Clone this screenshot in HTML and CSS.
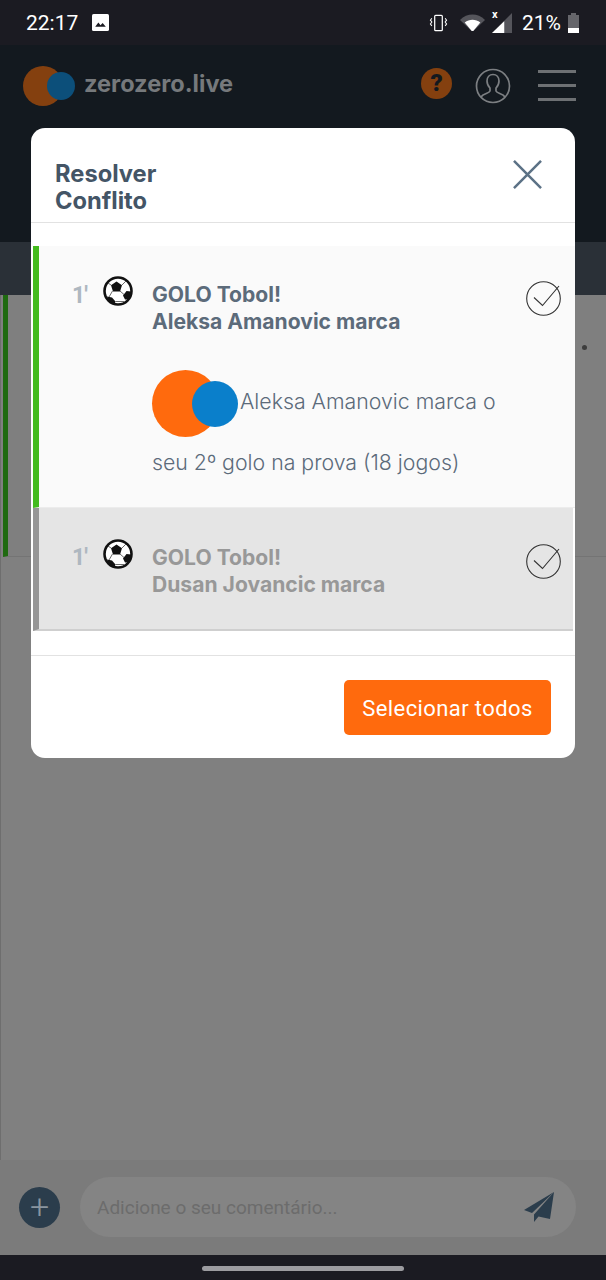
FILE: index.html
```html
<!DOCTYPE html>
<html lang="pt">
<head>
    <meta charset="UTF-8">
    <meta name="viewport" content="width=device-width, initial-scale=1.0">
    <title>Resolver Conflito</title>
    <link rel="stylesheet" href="styles.css">
</head>
<body>
    <svg class="defs" width="0" height="0">
        <symbol id="ball" viewBox="0 0 30 30">
            <circle cx="15" cy="15" r="13.500" fill="#fff" stroke="#111" stroke-width="2.600"/>
            <path d="M13.500 5.500l5.500 3.800-2 6.200H10L8 9.300z" fill="#111"/>
            <path d="M4 20.500l5 1 3.500 4-1 3c-3.500-1-6.500-4-7.500-8z" fill="#111"/>
            <path d="M28 15.500l-4.500-.5-3.500 4.500 2 4 3.500 0c1.500-2 2.500-5 2.500-8z" fill="#111"/>
            <path d="M17 15l4 3.500M9.500 15l-3.500 6M19 9l4-4M8 9L5 7M12.500 25.500H21" fill="none" stroke="#444" stroke-width=".8"/>
        </symbol>
        <symbol id="check" viewBox="0 0 36 36">
            <circle cx="17.500" cy="18.500" r="16.800" fill="none" stroke="#333" stroke-width="1.100"/>
            <path d="M8 17.500l8.500 8L33 6" fill="none" stroke="#333" stroke-width="1.100"/>
        </symbol>
    </svg>

    <div class="page">
        <div class="status-bar">
            <div class="status-left">
                <span>22:17</span>
                <svg class="status-pic" viewBox="0 0 16 16"><rect width="16" height="16" rx="1.500" fill="#fff"/><path d="M3 12l3-4 2 2.500 2-2 3 3.500z" fill="#1b1b22"/></svg>
            </div>
            <div class="status-right">
                <svg class="status-vib" viewBox="0 0 20 18"><rect x="6" y="1" width="8" height="16" rx="1" fill="none" stroke="#fff" stroke-width="1.300"/><path d="M3 4L1.500 6 3 8 1.500 10 3 12M17 4l1.500 2L17 8l1.500 2L17 12" fill="none" stroke="#fff" stroke-width="1.100"/></svg>
                <svg class="status-wifi" viewBox="0 0 24 16"><path d="M0 5.500C7-1.500 17-1.500 24 5.500L12 17z" fill="#55555b"/><path d="M4.500 8c4.500-3.500 10.500-3.500 15 0L12 17z" fill="#fff"/></svg>
                <div class="status-signal">
                    <svg viewBox="0 0 18 18"><path d="M18 0v18H0z" fill="#55555b"/><path d="M11 7.500V18H0z" fill="#fff"/></svg>
                    <span class="status-x">x</span>
                </div>
                <span class="status-pct">21%</span>
                <div class="battery"><div class="battery-cap"></div><div class="battery-body"><div class="battery-level"></div></div></div>
            </div>
        </div>

        <header class="top-bar">
            <div class="brand">
                <div class="logo logo-dim"><span class="logo-o"></span><span class="logo-b"></span></div>
                <span class="brand-name">zerozero.live</span>
            </div>
            <div class="top-icons">
                <div class="help">?</div>
                <svg class="user-icon" viewBox="0 0 36 36"><circle cx="18" cy="18" r="16.500" fill="none" stroke="#7c7f82" stroke-width="1.700"/><path d="M6 29c2-3.500 8-3.500 9-6v-3c-2-2-3-4-3-7 0-4 2.500-6.500 6-6.500s6 2.500 6 6.500c0 3-1 5-3 7v3c1 2.500 7 2.500 9 6" fill="none" stroke="#7c7f82" stroke-width="1.700"/></svg>
                <div class="menu-icon"><span></span><span></span><span></span></div>
            </div>
        </header>

        <div class="tab-band"></div>

        <main class="feed">
            <div class="feed-card"><span class="feed-dots"></span></div>
        </main>

        <div class="comment-bar">
            <div class="add-btn">+</div>
            <div class="comment-input">
                <span>Adicione o seu comentário...</span>
                <svg class="send-icon" viewBox="0 0 32 32"><path d="M31 1L1 19l8 3zM31 1L11 23.500V31l4.500-5.500L27 28z" fill="#2b3d4c"/></svg>
            </div>
        </div>

        <div class="nav-bar"><span class="nav-pill"></span></div>
    </div>

    <section class="modal">
        <div class="modal-head">
            <h2>Resolver<br>Conflito</h2>
            <svg class="close-icon" viewBox="0 0 30 30"><path d="M1 1l28 28M29 1L1 29" stroke="#5c7286" stroke-width="2.600" fill="none"/></svg>
        </div>

        <div class="modal-body">
            <div class="event event-on">
                <span class="minute">1'</span>
                <svg class="ball"><use href="#ball"/></svg>
                <div class="event-text">
                    <h3>GOLO Tobol!<br>Aleksa Amanovic marca</h3>
                    <p class="event-desc"><span class="logo logo-big"><span class="logo-o"></span><span class="logo-b"></span></span>Aleksa Amanovic marca o seu 2º golo na prova (18 jogos)</p>
                </div>
                <svg class="check"><use href="#check"/></svg>
            </div>
            <div class="event event-off">
                <span class="minute">1'</span>
                <svg class="ball"><use href="#ball"/></svg>
                <div class="event-text">
                    <h3>GOLO Tobol!<br>Dusan Jovancic marca</h3>
                </div>
                <svg class="check"><use href="#check"/></svg>
            </div>
        </div>

        <div class="modal-foot">
            <button class="select-all">Selecionar todos</button>
        </div>
    </section>
</body>
</html>
```

FILE: styles.css
```css
* {
    box-sizing: border-box;
}

body {
    margin: 0;
    font-family: Roboto, "Liberation Sans", sans-serif;
    background-color: #808080;
    color: #fff;
}

h2, h3, p {
    margin: 0;
}

.defs {
    position: absolute;
}

.page {
    width: 606px;
    height: 1280px;
    display: flex;
    flex-direction: column;
}

/* status bar */
.status-bar {
    height: 45px;
    padding: 0 27px 0 26px;
    display: flex;
    justify-content: space-between;
    align-items: center;
    background-color: #1b1b22;
    font-size: 21px;
}

.status-left, .status-right {
    display: flex;
    align-items: center;
}

.status-left {
    gap: 14px;
}

.status-pic {
    width: 17px;
    height: 17px;
}

.status-vib {
    width: 19px;
    height: 18px;
}

.status-wifi {
    width: 25px;
    height: 17px;
    margin-left: 12px;
}

.status-signal {
    position: relative;
    width: 20px;
    height: 19px;
    margin-left: 7px;
}

.status-signal svg {
    display: block;
}

.status-x {
    position: absolute;
    left: 0;
    top: -5px;
    font-size: 11px;
    font-weight: 700;
}

.status-pct {
    margin-left: 10px;
}

.battery {
    margin-left: 7px;
    width: 11px;
}

.battery-cap {
    width: 5px;
    height: 2px;
    margin: 0 auto;
    background-color: #66666b;
}

.battery-body {
    height: 18px;
    display: flex;
    align-items: flex-end;
    background-color: #66666b;
}

.battery-level {
    width: 100%;
    height: 5px;
    background-color: #fff;
}

/* dimmed header */
.top-bar {
    height: 197px;
    padding: 21px 30px 0 23px;
    display: flex;
    justify-content: space-between;
    align-items: flex-start;
    background-color: #13191f;
}

.brand {
    display: flex;
    align-items: center;
    gap: 9px;
}

.brand-name {
    margin-top: -5px;
    font-family: Inter, sans-serif;
    font-size: 23.600px;
    font-weight: 700;
    color: #76797c;
}

.logo {
    position: relative;
    display: inline-block;
}

.logo-dim {
    width: 52px;
    height: 40px;
}

.logo-o, .logo-b {
    position: absolute;
    border-radius: 50%;
}

.logo-dim .logo-o {
    left: 0;
    top: 0;
    width: 40px;
    height: 40px;
    background-color: #84400f;
}

.logo-dim .logo-b {
    left: 24px;
    top: 6px;
    width: 28px;
    height: 28px;
    background-color: #0c4f7a;
}

.top-icons {
    display: flex;
    align-items: flex-start;
    padding-top: 2px;
}

.help {
    width: 31px;
    height: 31px;
    margin: 0 0 0 -2px;
    border-radius: 50%;
    background-color: #84400f;
    color: #13191f;
    font-size: 24px;
    font-weight: 900;
    line-height: 31px;
    text-align: center;
}

.user-icon {
    width: 36px;
    height: 36px;
    margin-left: 23px;
}

.menu-icon {
    width: 38px;
    height: 31px;
    margin: 2px 0 0 27px;
    display: flex;
    flex-direction: column;
    justify-content: space-between;
}

.menu-icon span {
    height: 3px;
    background-color: #6d7073;
}

.tab-band {
    height: 53px;
    background-color: #2a3037;
}

/* page behind the dialog */
.feed {
    flex: 1;
    background-color: #808080;
    border-left: 1px solid #6e6e6e;
}

.feed-card {
    position: relative;
    height: 262px;
    margin-left: 2px;
    border-left: 5px solid #1f6a10;
    border-bottom: 1px solid #747474;
    background-color: #7f7f7f;
}

.feed-dots {
    position: absolute;
    right: 19px;
    top: 50px;
    width: 5px;
    height: 5px;
    border-radius: 50%;
    background-color: #3d3d3d;
}

.comment-bar {
    height: 95px;
    padding: 17px 30px 0 19px;
    display: flex;
    gap: 20px;
    background-color: #7b7b7b;
}

.add-btn {
    width: 41px;
    height: 41px;
    margin-top: 10px;
    border-radius: 50%;
    background-color: #2b3d4c;
    color: #8a959f;
    font-size: 34px;
    font-weight: 300;
    line-height: 39px;
    text-align: center;
}

.comment-input {
    flex: 1;
    height: 60px;
    padding: 0 21px 0 17px;
    display: flex;
    justify-content: space-between;
    align-items: center;
    border-radius: 30px;
    background-color: #848484;
    color: #6c6c6c;
    font-size: 19px;
}

.send-icon {
    width: 32px;
    height: 32px;
}

.nav-bar {
    height: 25px;
    padding-top: 11px;
    display: flex;
    justify-content: center;
    background-color: #1b1b22;
}

.nav-pill {
    width: 202px;
    height: 5px;
    border-radius: 3px;
    background-color: #9c9ca0;
}

/* dialog */
.modal {
    position: absolute;
    left: 31px;
    top: 128px;
    width: 544px;
    height: 630px;
    display: flex;
    flex-direction: column;
    border-radius: 14px;
    background-color: #fff;
    color: #4a5c6d;
    overflow: hidden;
}

.modal-head {
    height: 95px;
    padding: 32px 33px 0 24px;
    display: flex;
    justify-content: space-between;
    align-items: flex-start;
    border-bottom: 1px solid #e2e2e2;
}

.modal-head h2 {
    font-family: Inter, sans-serif;
    font-size: 23.700px;
    font-weight: 700;
    line-height: 27px;
    color: #445566;
}

.close-icon {
    width: 29px;
    height: 29px;
}

.modal-body {
    height: 433px;
    padding: 23px 2px 0;
    border-bottom: 1px solid #e2e2e2;
}

.event {
    display: flex;
    border-left: 6px solid;
}

.event-on {
    height: 262px;
    padding: 35px 0 0 33px;
    margin-right: -2px;
    border-left-color: #43bb1e;
    border-bottom: 1px solid #ececec;
    background-color: #fafafa;
}

.event-off {
    height: 123px;
    padding: 35px 0 0 33px;
    border-left-color: #969696;
    border-bottom: 2px solid #cfcfcf;
    background-color: #e5e5e5;
}

.minute {
    width: 31px;
    margin-top: 2px;
    font-size: 23px;
    font-weight: 700;
    line-height: 26px;
    letter-spacing: -1px;
    color: #aeb7c0;
}

.ball {
    width: 30px;
    height: 30px;
    margin-top: -5px;
    flex: none;
}

.event-off .ball {
    margin-top: -4px;
}

.event-text {
    width: 375px;
    margin-left: 19px;
}

.event-off .event-text {
    margin-top: 1px;
}

.event-text h3 {
    font-family: Inter, sans-serif;
    font-size: 21.100px;
    font-weight: 700;
    line-height: 27px;
    color: #5c6b7a;
}

.event-off h3 {
    color: #989898;
}

.event-desc {
    margin-top: 36px;
    font-family: Inter, sans-serif;
    font-size: 21.300px;
    font-weight: 300;
    line-height: 61px;
    color: #5c6b7a;
}

.logo-big {
    width: 88px;
    height: 68px;
    margin: -6px 0 -8px;
    vertical-align: middle;
}

.logo-big .logo-o {
    left: 0;
    top: 0;
    width: 67px;
    height: 67px;
    background-color: #ff6a0d;
}

.logo-big .logo-b {
    left: 40px;
    top: 11px;
    width: 46px;
    height: 46px;
    background-color: #0a7fcb;
}

.check {
    width: 36px;
    height: 36px;
    margin: -1px 0 0 -1px;
    flex: none;
}

.event-off .check {
    margin-top: 0;
}

.modal-foot {
    flex: 1;
    padding: 24px 24px 0;
    display: flex;
    justify-content: flex-end;
    align-items: flex-start;
}

.select-all {
    width: 207px;
    height: 55px;
    padding-top: 2px;
    border: none;
    border-radius: 5px;
    background-color: #ff6a0d;
    color: #fff;
    font-family: inherit;
    font-size: 22px;
    font-weight: 400;
    letter-spacing: .4px;
}
```
